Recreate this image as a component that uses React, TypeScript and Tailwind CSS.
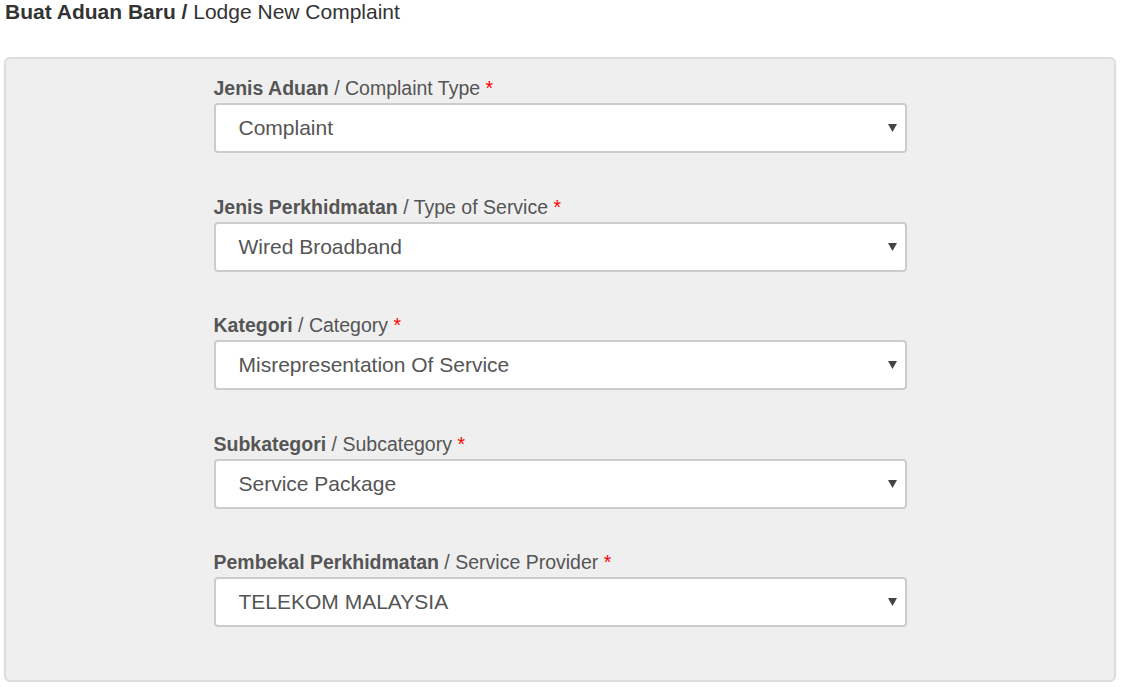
import React from "react";

const fields = [
  { bm: "Jenis Aduan", en: "Complaint Type", value: "Complaint" },
  { bm: "Jenis Perkhidmatan", en: "Type of Service", value: "Wired Broadband" },
  { bm: "Kategori", en: "Category", value: "Misrepresentation Of Service" },
  { bm: "Subkategori", en: "Subcategory", value: "Service Package" },
  { bm: "Pembekal Perkhidmatan", en: "Service Provider", value: "TELEKOM MALAYSIA" },
];

export default function App() {
  return (
    <div className="w-[1121px] h-[687px] bg-white" style={{ fontFamily: '"Liberation Sans", Arial, sans-serif' }}>
      <div className="h-[57px] pl-[5px] pt-[1px]">
        <div className="text-[21px] leading-[22px] text-[#333]">
          <span className="font-bold">Buat Aduan Baru /</span> Lodge New Complaint
        </div>
      </div>
      <div className="ml-[4px] w-[1112px] h-[625px] rounded-[6px] border-2 border-[#dcdcdc] bg-[#efefef] pt-[18px]">
        <div className="mx-auto w-[693px] flex flex-col gap-[42.5px]">
          {fields.map((f) => (
            <div key={f.bm} className="flex flex-col">
              <div className="text-[19.5px] leading-[22px] text-[#555] mb-[4px]">
                <span className="font-bold">{f.bm}</span> / {f.en} <span className="text-[#ff0000]">*</span>
              </div>
              <div className="h-[50px] rounded-[4px] border-2 border-[#cccccc] bg-white flex items-center pl-[23px] pr-[8px]">
                <span className="flex-1 text-[21px] text-[#555]">{f.value}</span>
                <svg width="9" height="8" viewBox="0 0 9 8">
                  <polygon points="0,0 9,0 4.5,8" fill="#444" />
                </svg>
              </div>
            </div>
          ))}
        </div>
      </div>
    </div>
  );
}
